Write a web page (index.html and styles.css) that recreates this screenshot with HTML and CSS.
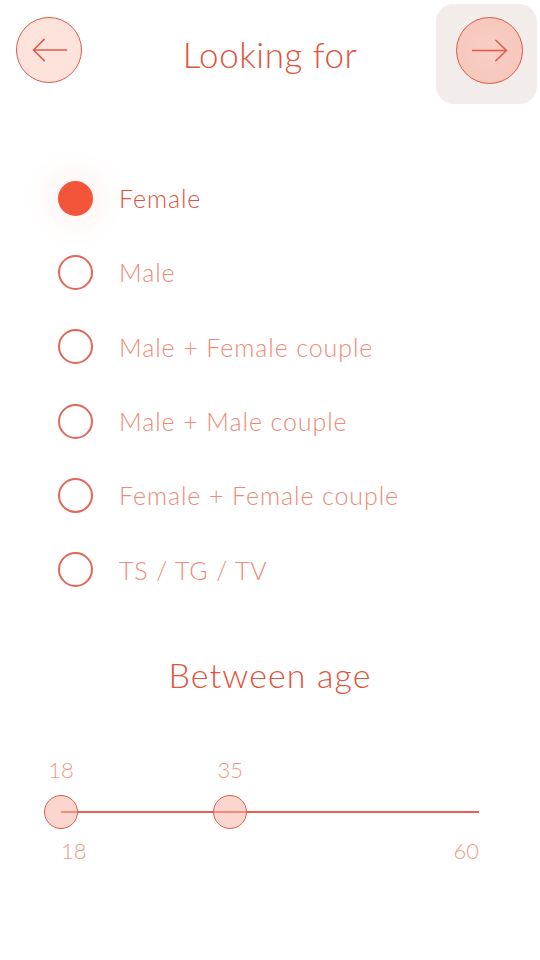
FILE: index.html
```html
<!DOCTYPE html>
<html>
<head>
<meta charset="utf-8">
<link rel="stylesheet" href="styles.css">
</head>
<body>
<div class="screen">
  <header class="header">
    <button class="circle-btn back" aria-label="Back">
      <svg width="66" height="66" viewBox="0 0 66 66"><path d="M17 33 H51 M28 22 L17 33 L28 44" fill="none" stroke="#e05a47" stroke-width="1.6" stroke-linecap="round" stroke-linejoin="round"/></svg>
    </button>
    <h1 class="title">Looking for</h1>
    <div class="next-wrap">
      <button class="circle-btn next" aria-label="Next">
        <svg width="67" height="67" viewBox="0 0 67 67"><path d="M16 33.5 H51 M40 23 L51 33.5 L40 44" fill="none" stroke="#e05a47" stroke-width="1.6" stroke-linecap="round" stroke-linejoin="round"/></svg>
      </button>
    </div>
  </header>

  <ul class="options">
    <li class="option selected"><span class="radio"></span><span class="label">Female</span></li>
    <li class="option"><span class="radio"></span><span class="label">Male</span></li>
    <li class="option"><span class="radio"></span><span class="label">Male + Female couple</span></li>
    <li class="option"><span class="radio"></span><span class="label">Male + Male couple</span></li>
    <li class="option"><span class="radio"></span><span class="label">Female + Female couple</span></li>
    <li class="option"><span class="radio"></span><span class="label">TS / TG / TV</span></li>
  </ul>

  <h2 class="subtitle">Between age</h2>

  <div class="slider">
    <div class="values">
      <span class="value" style="left: 0%">18</span>
      <span class="value" style="left: 40.476%">35</span>
    </div>
    <div class="track">
      <span class="thumb" style="left: 0%"></span>
      <span class="thumb" style="left: 40.476%"></span>
    </div>
    <div class="bounds">
      <span>18</span>
      <span>60</span>
    </div>
  </div>
</div>
</body>
</html>
```

FILE: styles.css
```css
* { box-sizing: border-box; }
html, body {
  margin: 0;
  padding: 0;
  background: #ffffff;
}
body {
  font-family: Lato, "Noto Sans", "Liberation Sans", sans-serif;
  font-weight: 300;
  color: #e4553f;
}
.screen {
  width: 540px;
  height: 960px;
  overflow: hidden;
}
.header {
  display: grid;
  grid-template-columns: 1fr auto 1fr;
  align-items: start;
  padding-top: 4px;
}
.circle-btn {
  display: flex;
  align-items: center;
  justify-content: center;
  padding: 0;
  border-radius: 50%;
  cursor: pointer;
}
.back {
  width: 66px;
  height: 66px;
  margin: 13px 0 0 16px;
  background: #fde3dc;
  border: 1.6px solid #e05a47;
  justify-self: start;
}
.title {
  margin: 28px 0 0 0;
  font-size: 35px;
  font-weight: 300;
  letter-spacing: 0.5px;
  line-height: 44px;
  color: #e2523c;
  text-align: center;
}
.next-wrap {
  justify-self: end;
  margin-right: 3px;
  width: 101px;
  height: 100px;
  border-radius: 18px;
  background: #f2eceb;
  padding: 13px 14px 20px 20px;
}
.next {
  width: 67px;
  height: 67px;
  background: radial-gradient(circle, #f8cec4 0%, #f7c8bc 70%, #f4bcae 100%);
  border: 1.6px solid #e05a47;
}
.options {
  list-style: none;
  margin: 57px 0 0 0;
  padding: 0 0 0 58px;
}
.option {
  display: flex;
  align-items: center;
  height: 74.3px;
  gap: 26px;
}
.radio {
  width: 35px;
  height: 35px;
  border-radius: 50%;
  border: 2px solid #e26756;
  flex: none;
}
.selected .radio {
  background: #f4553a;
  border-color: #f4553a;
  box-shadow: 0 0 24px 14px rgba(250, 110, 90, 0.06);
}
.label {
  font-size: 25px;
  letter-spacing: 0.9px;
  color: #ee8a78;
  line-height: 30px;
}
.selected .label {
  color: #e2523c;
}
.subtitle {
  margin: 46px 0 0 0;
  font-size: 34px;
  font-weight: 300;
  letter-spacing: 1.1px;
  line-height: 44px;
  text-align: center;
  color: #e2523c;
}
.slider {
  margin: 59px 0 0 61px;
  width: 418px;
}
.values {
  position: relative;
  height: 28px;
}
.value {
  position: absolute;
  top: 0;
  transform: translateX(-50%);
  font-size: 22px;
  line-height: 28px;
  color: #f09888;
}
.track {
  position: relative;
  height: 2px;
  background: #ea604c;
  margin-top: 27px;
}
.thumb {
  position: absolute;
  top: 50%;
  width: 34px;
  height: 34px;
  border-radius: 50%;
  transform: translate(-50%, -50%);
  background: rgba(246, 180, 166, 0.55);
  border: 1.8px solid #e05a47;
}
.bounds {
  display: flex;
  justify-content: space-between;
  margin: 24px 0 0 0;
  font-size: 22px;
  line-height: 28px;
  color: #f09888;
}
```
